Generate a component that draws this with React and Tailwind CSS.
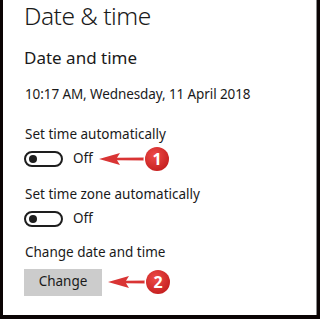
import React from "react";

const font = { fontFamily: '"Noto Sans", "Open Sans", sans-serif' };

function Toggle() {
  return (
    <div className="w-[39px] h-[16px] rounded-full border-2 border-[#1e1e1e] flex items-center pl-[3px] shrink-0">
      <div className="w-[8px] h-[8px] rounded-full bg-[#1e1e1e]" />
    </div>
  );
}

function Callout({ n, dist }) {
  const cx = dist + 1;
  const w = cx + 14;
  return (
    <svg width={w} height="28" viewBox={`0 0 ${w} 28`} className="block shrink-0">
      <defs>
        <radialGradient id={`g${n}`} cx="40%" cy="35%" r="70%">
          <stop offset="0%" stopColor="#ee4b48" />
          <stop offset="100%" stopColor="#c41e1e" />
        </radialGradient>
      </defs>
      <path d={`M1 14 L22 8 L19 12.8 L${cx - 10} 12.4 L${cx - 10} 15.6 L19 15.2 L22 20 Z`} fill="#d93434" />
      <circle cx={cx} cy="14" r="13.5" fill="#ffffff" />
      <circle cx={cx} cy="14" r="12" fill={`url(#g${n})`} />
      <text x={cx} y="19.5" textAnchor="middle" fontSize="16" fontWeight="700" fill="#fff" style={font}>{n}</text>
    </svg>
  );
}

export default function App() {
  return (
    <div className="w-[320px] h-[319px] bg-[#0a0404] overflow-hidden">
      <div className="ml-[3px] w-[314px] h-[315px] bg-white border-r border-[#8a8a8a] pl-[21px] text-[#1a1a1a]" style={font}>
        <div className="text-[24.5px] font-light leading-none pt-[4px] tracking-[-0.5px]">Date &amp; time</div>
        <div className="text-[17px] leading-none mt-[20px]">Date and time</div>
        <div className="text-[13.5px] leading-none mt-[22px] ml-[1px] tracking-[-0.1px]">10:17 AM, Wednesday, 11 April 2018</div>
        <div className="text-[13.5px] leading-none mt-[27px] ml-[1px]">Set time automatically</div>
        <div className="flex items-center mt-[9px] h-[16px]">
          <Toggle />
          <span className="text-[13.5px] leading-none ml-[10px]">Off</span>
          <div className="ml-[5px]"><Callout n="1" dist={58} /></div>
        </div>
        <div className="text-[13.5px] leading-none mt-[21px] ml-[1px]">Set time zone automatically</div>
        <div className="flex items-center mt-[10px] h-[16px]">
          <Toggle />
          <span className="text-[13.5px] leading-none ml-[10px]">Off</span>
        </div>
        <div className="text-[13.5px] leading-none mt-[19px] ml-[1px]">Change date and time</div>
        <div className="flex items-center mt-[9px] h-[27px]">
          <div className="w-[78px] h-[27px] bg-[#cccccc] flex items-center justify-center text-[13.5px] leading-none shrink-0">Change</div>
          <div className="ml-[5px]"><Callout n="2" dist={50} /></div>
        </div>
      </div>
    </div>
  );
}
